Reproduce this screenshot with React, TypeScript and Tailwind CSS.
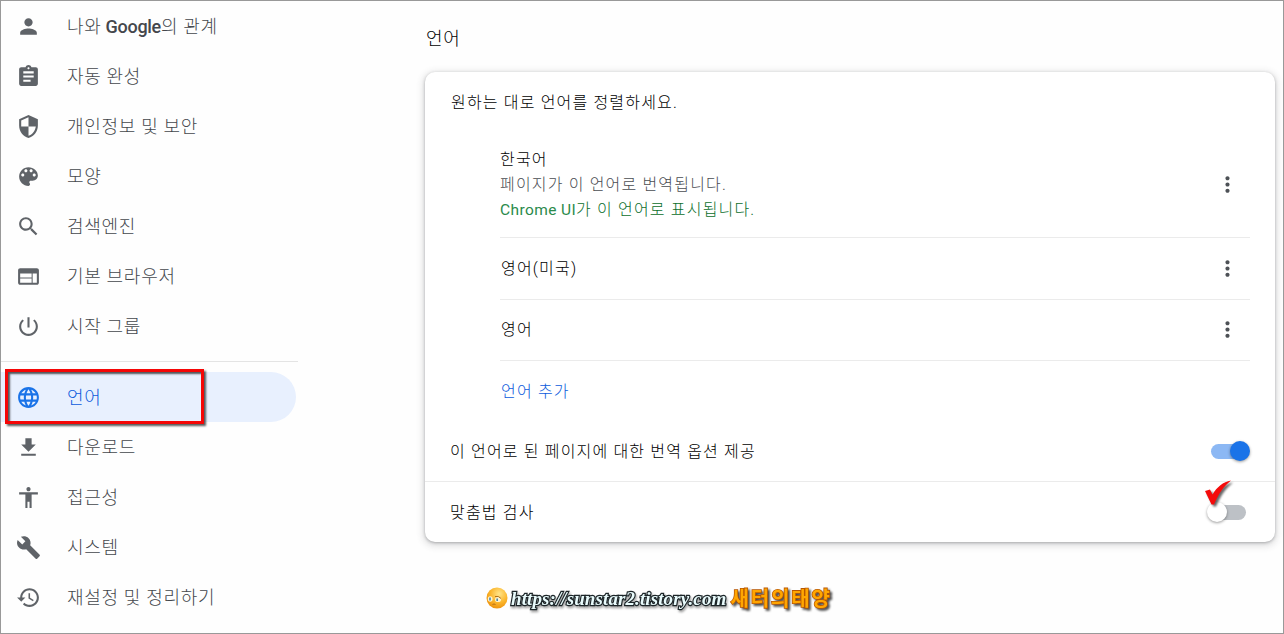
import type { ReactNode } from 'react';
import clsx from 'clsx';

type MenuItem = {
  label: ReactNode;
  icon: string;
  selected?: boolean;
};

const mainMenu: MenuItem[] = [
  {
    label: (
      <>
        나와 <span className="-ml-px font-medium tracking-[-0.3px]">Google</span>의 관계
      </>
    ),
    icon: 'M12 12c2.21 0 4-1.79 4-4s-1.79-4-4-4-4 1.79-4 4 1.79 4 4 4zm0 2c-2.67 0-8 1.34-8 4v2h16v-2c0-2.66-5.33-4-8-4z',
  },
  {
    label: '자동 완성',
    icon: 'M19 3h-4.18C14.4 1.84 13.3 1 12 1c-1.3 0-2.4.84-2.82 2H5c-1.1 0-2 .9-2 2v14c0 1.1.9 2 2 2h14c1.1 0 2-.9 2-2V5c0-1.1-.9-2-2-2zm-7 0c.55 0 1 .45 1 1s-.45 1-1 1-1-.45-1-1 .45-1 1-1zm2 14H7v-2h7v2zm3-4H7v-2h10v2zm0-4H7V7h10v2z',
  },
  {
    label: '개인정보 및 보안',
    icon: 'M12 1L3 5v6c0 5.55 3.84 10.74 9 12 5.16-1.26 9-6.45 9-12V5l-9-4zm0 10.99h7c-.53 4.12-3.28 7.79-7 8.94V12H5V6.3l7-3.11v8.8z',
  },
  {
    label: '모양',
    icon: 'M12 3c-4.97 0-9 4.03-9 9s4.03 9 9 9c.83 0 1.5-.67 1.5-1.5 0-.39-.15-.74-.39-1.01-.23-.26-.38-.61-.38-.99 0-.83.67-1.5 1.5-1.5H16c2.76 0 5-2.24 5-5 0-4.42-4.03-8-9-8zm-5.5 9c-.83 0-1.5-.67-1.5-1.5S5.67 9 6.5 9 8 9.67 8 10.5 7.33 12 6.5 12zm3-4C8.67 8 8 7.33 8 6.5S8.67 5 9.5 5s1.5.67 1.5 1.5S10.33 8 9.5 8zm5 0c-.83 0-1.5-.67-1.5-1.5S13.67 5 14.5 5s1.5.67 1.5 1.5S15.33 8 14.5 8zm3 4c-.83 0-1.5-.67-1.5-1.5S16.67 9 17.5 9s1.5.67 1.5 1.5-.67 1.5-1.5 1.5z',
  },
  {
    label: '검색엔진',
    icon: 'M15.5 14h-.79l-.28-.27C15.41 12.59 16 11.11 16 9.5 16 5.91 13.09 3 9.5 3S3 5.91 3 9.5 5.91 16 9.5 16c1.61 0 3.09-.59 4.23-1.57l.27.28v.79l5 4.99L20.49 19l-4.99-5zm-6 0C7.01 14 5 11.99 5 9.5S7.01 5 9.5 5 14 7.01 14 9.5 11.99 14 9.5 14z',
  },
  {
    label: '기본 브라우저',
    icon: 'M20 4H4c-1.1 0-1.99.9-1.99 2L2 18c0 1.1.9 2 2 2h16c1.1 0 2-.9 2-2V6c0-1.1-.9-2-2-2zm-5 14H4v-4h11v4zm0-5H4V9h11v4zm5 5h-4V9h4v9z',
  },
  {
    label: '시작 그룹',
    icon: 'M13 3h-2v10h2V3zm4.83 2.17l-1.42 1.42C17.99 7.86 19 9.81 19 12c0 3.87-3.13 7-7 7s-7-3.13-7-7c0-2.19 1.01-4.14 2.58-5.42L6.17 5.17C4.23 6.82 3 9.26 3 12c0 4.97 4.03 9 9 9s9-4.03 9-9c0-2.74-1.23-5.18-3.17-6.83z',
  },
];

const advancedMenu: MenuItem[] = [
  {
    label: '언어',
    selected: true,
    icon: 'M11.99 2C6.47 2 2 6.48 2 12s4.47 10 9.99 10C17.52 22 22 17.52 22 12S17.52 2 11.99 2zm6.93 6h-2.95c-.32-1.25-.78-2.45-1.38-3.56 1.84.63 3.37 1.91 4.33 3.56zM12 4.04c.83 1.2 1.48 2.53 1.91 3.96h-3.82c.43-1.43 1.08-2.76 1.91-3.96zM4.26 14C4.1 13.36 4 12.69 4 12s.1-1.36.26-2h3.38c-.08.66-.14 1.32-.14 2 0 .68.06 1.34.14 2H4.26zm.82 2h2.95c.32 1.25.78 2.45 1.38 3.56-1.84-.63-3.37-1.9-4.33-3.56zm2.95-8H5.08c.96-1.66 2.49-2.93 4.33-3.56C8.81 5.55 8.35 6.75 8.03 8zM12 19.96c-.83-1.2-1.48-2.53-1.91-3.96h3.82c-.43 1.43-1.08 2.76-1.91 3.96zM14.34 14H9.66c-.09-.66-.16-1.32-.16-2 0-.68.07-1.35.16-2h4.68c.09.65.16 1.32.16 2 0 .68-.07 1.34-.16 2zm.25 5.56c.6-1.11 1.06-2.31 1.38-3.56h2.95c-.96 1.65-2.49 2.93-4.33 3.56zM16.36 14c.08-.66.14-1.32.14-2 0-.68-.06-1.34-.14-2h3.38c.16.64.26 1.31.26 2s-.1 1.36-.26 2h-3.38z',
  },
  { label: '다운로드', icon: 'M19 9h-4V3H9v6H5l7 7 7-7zM5 18v2h14v-2H5z' },
  {
    label: '접근성',
    icon: 'M12 2c1.1 0 2 .9 2 2s-.9 2-2 2-2-.9-2-2 .9-2 2-2zm9 7h-6v13h-2v-6h-2v6H9V9H3V7h18v2z',
  },
  {
    label: '시스템',
    icon: 'M22.7 19l-9.1-9.1c.9-2.3.4-5-1.5-6.9-2-2-5-2.4-7.4-1.3L9 6 6 9 1.6 4.7C.4 7.1.9 10.1 2.9 12.1c1.9 1.9 4.6 2.4 6.9 1.5l9.1 9.1c.4.4 1 .4 1.4 0l2.3-2.3c.5-.4.5-1.1.1-1.4z',
  },
  {
    label: '재설정 및 정리하기',
    icon: 'M13 3c-4.97 0-9 4.03-9 9H1l3.89 3.89.07.14L9 12H6c0-3.87 3.13-7 7-7s7 3.13 7 7-3.13 7-7 7c-1.93 0-3.68-.79-4.94-2.06l-1.42 1.42C8.27 19.99 10.51 21 13 21c4.97 0 9-4.03 9-9s-4.03-9-9-9zm-1 5v5l4.28 2.54.72-1.21-3.5-2.08V8H12z',
  },
];

function MenuRow({ label, icon, selected }: MenuItem) {
  return (
    <a
      className={clsx(
        'flex h-[50px] w-[295px] items-center pl-[15px] text-[18px] tracking-[0.7px]',
        selected ? 'rounded-r-full bg-[#e8f0fe] text-[#1a73e8]' : 'text-[#5f6368]',
      )}
    >
      <svg viewBox="0 0 24 24" className="size-[25px] shrink-0" fill="currentColor">
        <path d={icon} />
      </svg>
      <span className={clsx('ml-[26px] whitespace-nowrap', selected ? 'text-[#0d5bdc]' : 'text-[#44474c]')}>
        {label}
      </span>
    </a>
  );
}

function MoreButton() {
  return (
    <button className="flex w-[45px] shrink-0 justify-center text-[#4d5156]">
      <svg viewBox="0 0 24 24" className="size-[25px]" fill="currentColor">
        <path d="M12 8c1.1 0 2-.9 2-2s-.9-2-2-2-2 .9-2 2 .9 2 2 2zm0 2c-1.1 0-2 .9-2 2s.9 2 2 2 2-.9 2-2-.9-2-2-2zm0 6c-1.1 0-2 .9-2 2s.9 2 2 2 2-.9 2-2-.9-2-2-2z" />
      </svg>
    </button>
  );
}

function Toggle({ on }: { on?: boolean }) {
  return (
    <div className={clsx('relative mr-[29px] h-[15px] w-[35px] rounded-full', on ? 'bg-[#8cb8f4]' : 'bg-[#bdc1c6]')}>
      <span
        className={clsx(
          'absolute -top-[3px] size-5 rounded-full shadow-[0_1px_3px_rgba(0,0,0,0.4)]',
          on ? '-right-[4px] bg-[#1a73e8]' : '-left-[4px] bg-white',
        )}
      />
    </div>
  );
}

function CheckMark() {
  return (
    <svg viewBox="0 0 32 30" className="absolute -top-[26px] -left-[8px] h-[30px] w-8 drop-shadow-[2px_2px_1px_rgba(0,0,0,0.6)]">
      <path d="M2 12 7 10.5 9.5 15.5C14 8 20 3 28 1.5 21 7 16 14 11 25.5L8.5 25.5Z" fill="#f40b0b" />
    </svg>
  );
}

function Watermark() {
  return (
    <div className="ml-[61px] mt-[43px] flex h-[28px] items-center whitespace-nowrap">
      <svg viewBox="0 0 22 22" className="-mt-[2px] size-[22px] shrink-0">
        <defs>
          <radialGradient id="face" cx="0.6" cy="0.3" r="0.7">
            <stop offset="0" stopColor="#ffe58a" />
            <stop offset="0.6" stopColor="#fbb52b" />
            <stop offset="1" stopColor="#ee950f" />
          </radialGradient>
        </defs>
        <circle cx="11" cy="11" r="10.5" fill="url(#face)" />
        <ellipse cx="4.2" cy="12" rx="2.4" ry="2.8" fill="#fff3ce" />
        <ellipse cx="12" cy="12.5" rx="3" ry="2.6" fill="#fff3ce" />
        <path d="M9 9.5Q12.5 8.5 15 11.5" fill="none" stroke="#a96710" strokeWidth="0.9" />
        <path d="M4 10.5v3M11.2 11.5v2.5" stroke="#4d86a8" strokeWidth="1.6" />
        <path d="M6.5 17.5q1.5-1 3 0" fill="none" stroke="#ad6812" strokeWidth="0.9" />
      </svg>
      <span className="ml-[3px] font-['Liberation_Serif',serif] text-[19px] font-bold italic tracking-[0.1px] text-[#e9fbfc] [-webkit-text-stroke:2.4px_#1c2528] [paint-order:stroke_fill] drop-shadow-[1px_2px_1px_rgba(0,0,0,0.35)]">
        https://sunstar2.tistory.com
      </span>
      <span className="ml-[4px] text-[20px] font-bold tracking-[1.9px] text-[#ffa600] [-webkit-text-stroke:1.6px_#b85600] [paint-order:stroke_fill] drop-shadow-[2px_2px_1px_rgba(0,0,0,0.7)]">
        새터의태양
      </span>
    </div>
  );
}

export default function App() {
  return (
    <div className="flex h-[634px] w-[1284px] overflow-hidden border border-[#999] bg-[#fefefe] font-['Roboto','Noto_Sans_CJK_KR',sans-serif] font-light">
      <nav className="relative w-[424px] shrink-0">
        {mainMenu.map((item, i) => (
          <MenuRow key={i} {...item} />
        ))}
        <div className="my-[10px] h-px w-[297px] bg-[#e4e4e4]" />
        {advancedMenu.map((item, i) => (
          <MenuRow key={i} {...item} />
        ))}

        {/* Highlight frame around the selected entry */}
        <div className="absolute left-[4px] top-[368px] h-[55px] w-[199px] border-[3px] border-[#f50606] shadow-[2px_2px_2px_rgba(0,0,0,0.65),inset_2px_2px_2px_rgba(0,0,0,0.65)]" />
      </nav>

      <main className="w-[850px] shrink-0 text-[16px] tracking-[1.18px] text-black">
        <h1 className="flex h-[71px] items-center pl-px pt-[4px] text-[18px] tracking-[0.65px]">언어</h1>

        <section className="h-[470px] rounded-[10px] bg-white shadow-[0_1px_3px_rgba(60,64,67,0.35),0_2px_7px_2px_rgba(60,64,67,0.16)]">
          <p className="flex h-[60px] items-center pl-[26px] pt-[2px]">원하는 대로 언어를 정렬하세요.</p>

          <div className="ml-[75px] mr-[25px]">
            <div className="flex h-[106px] items-center justify-between border-b border-[#ebebeb]">
              <div className="leading-[25px]">
                <p>한국어</p>
                <p className="text-[#4a4d52]">페이지가 이 언어로 번역됩니다.</p>
                <p className="text-[#0b6e2b]">
                  <span className="text-[15.5px] font-normal tracking-[0.4px] text-[#2b8a4b]">Chrome UI</span>가 이 언어로 표시됩니다.
                </p>
              </div>
              <MoreButton />
            </div>
            <div className="flex h-[62px] items-center justify-between border-b border-[#ebebeb]">
              <p className="pl-px">영어(미국)</p>
              <MoreButton />
            </div>
            <div className="flex h-[61px] items-center justify-between border-b border-[#ebebeb] pb-px">
              <p className="pl-px pt-px">영어</p>
              <MoreButton />
            </div>
            <div className="flex h-[60px] items-center pl-px pt-[2px] text-[#0d5bdc]">언어 추가</div>
          </div>

          <div className="flex h-[61px] items-center justify-between border-b border-[#ebebeb] pl-[25px]">
            <p className="pt-[2px]">이 언어로 된 페이지에 대한 번역 옵션 제공</p>
            <Toggle on />
          </div>
          <div className="flex h-[60px] items-center justify-between pl-[25px]">
            <p className="pt-[2px]">맞춤법 검사</p>
            <div className="relative">
              <Toggle />
              <CheckMark />
            </div>
          </div>
        </section>

        <Watermark />
      </main>
    </div>
  );
}
